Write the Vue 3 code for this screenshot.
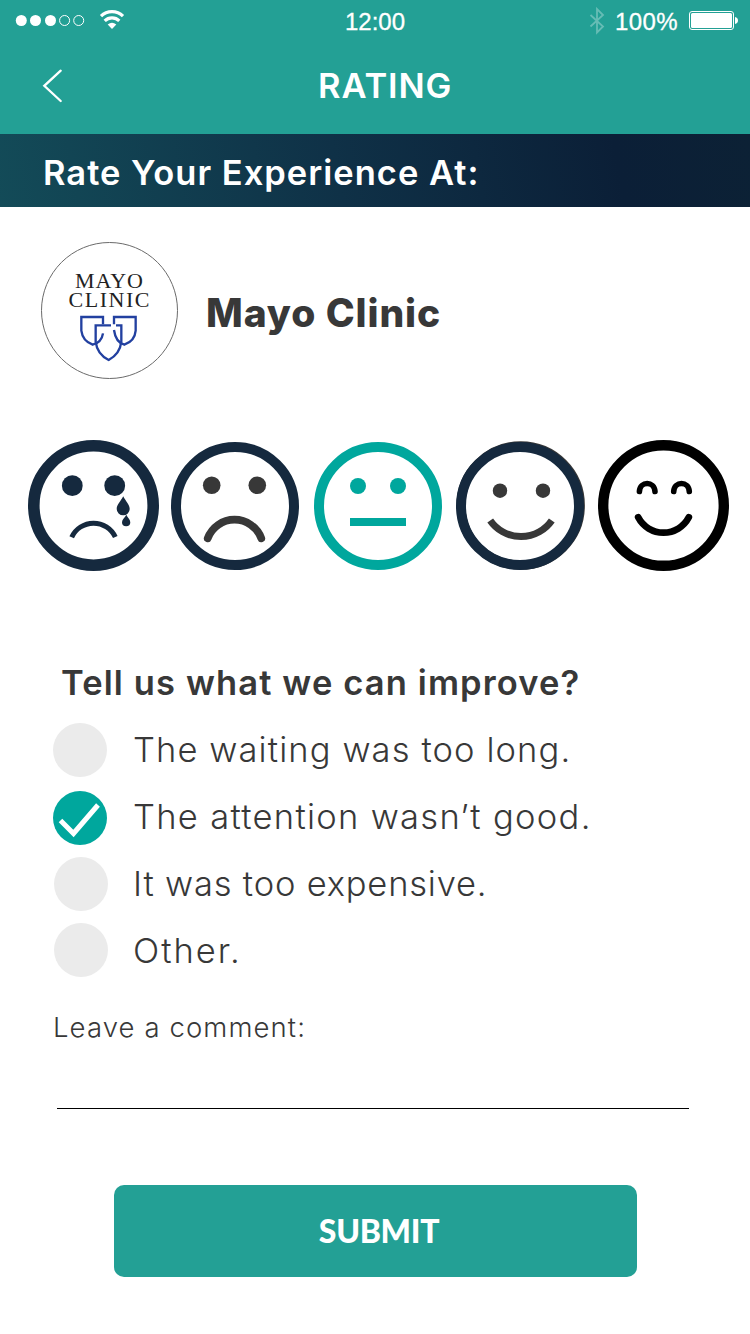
<script setup>
import { ref } from 'vue'

const options = [
  { id: 'waiting', label: 'The waiting was too long.' },
  { id: 'attention', label: 'The attention wasn’t good.' },
  { id: 'expensive', label: 'It was too expensive.' },
  { id: 'other', label: 'Other.' },
]
const selected = ref('attention')
</script>

<template>
  <main class="screen">
    <header class="top">
      <div class="status">
        <svg class="signal" width="130" height="40" viewBox="0 0 130 40">
          <g fill="#fff">
            <circle cx="21.3" cy="20.5" r="5.5" />
            <circle cx="35.5" cy="20.5" r="5.5" />
            <circle cx="50.5" cy="20.5" r="5.5" />
          </g>
          <g fill="none" stroke="#fff">
            <circle cx="64.6" cy="20.5" r="5" />
            <circle cx="78.7" cy="20.5" r="5" />
          </g>
          <g fill="none" stroke="#fff" stroke-width="3.200">
            <path d="M101 16.2a15.6 15.6 0 0 1 22 0" />
            <path d="M104.700 20.900a10.400 10.400 0 0 1 14.600 0" />
          </g>
          <path d="M107.700 24.600q4.300-3.800 8.600 0L112 29z" fill="#fff" />
        </svg>
        <span class="time">12:00</span>
        <div class="power">
          <svg class="bluetooth" width="16" height="28" viewBox="0 0 16 28">
            <path d="M1.500 8L14 19.500L8 25.500V2L14 8L1.500 19.500" fill="none" stroke="#fff" stroke-width="1.800" />
          </svg>
          <span class="percent">100%</span>
          <svg width="50" height="20" viewBox="0 0 50 20">
            <rect x=".5" y=".5" width="44" height="18" rx="2.500" fill="none" stroke="#fff" />
            <rect x="2" y="2" width="41" height="15" rx="1.500" fill="#fff" />
            <path d="M46 6q3 .8 3 3.500t-3 3.500z" fill="#fff" />
          </svg>
        </div>
      </div>
      <div class="nav">
        <svg class="back" width="22" height="34" viewBox="0 0 22 34">
          <path d="M18.700 1.700L2.300 16.800L18.700 32" fill="none" stroke="#fff" stroke-width="2.300" stroke-linecap="round" />
        </svg>
        <h1>RATING</h1>
      </div>
    </header>

    <h2 class="banner">Rate Your Experience At:</h2>

    <section class="place">
      <svg class="logo" width="138" height="138" viewBox="0 0 138 138">
        <circle cx="68.500" cy="68.500" r="68" fill="#fff" stroke="#6b6b6b" />
        <g font-family="'Liberation Serif', serif" font-size="22" fill="#222">
          <text x="34" y="45.600" textLength="68">MAYO</text>
          <text x="27.500" y="64.800" textLength="81">CLINIC</text>
        </g>
        <g transform="translate(-11 -12) scale(.33333)" fill="none" stroke="#2240a0" stroke-width="7">
          <path d="M219 283V261H154V302C157 326 171 338 188 344C204 340 216 330 219 310" />
          <path d="M252 283V261H317V302C315 326 301 338 283 344C269 340 256 330 252 300" />
          <path d="M243 286H197V335C200 362 216 380 236 390C255 380 271 362 274 335V286H258" />
        </g>
      </svg>
      <strong>Mayo Clinic</strong>
    </section>

    <section class="faces">
      <svg width="143" height="142" viewBox="22 435 143 142" fill="none" stroke="#15293e">
        <circle cx="93.500" cy="505.500" r="59.700" stroke-width="11.600" />
        <g fill="#15293e" stroke="none">
          <circle cx="72.300" cy="485.700" r="10.400" />
          <circle cx="114.700" cy="485.700" r="10.400" />
          <path d="M123.200 496.300C125.500 501 129.700 504.500 129.700 509A6.500 6.300 0 0 1 116.700 509C116.700 504.500 121 501 123.200 496.300Z" />
          <path d="M126.300 514.700C127.500 517.500 130.300 519.500 130.300 522.300A4.150 3.900 0 0 1 122 522.300C122 519.500 125 517.500 126.300 514.700Z" />
        </g>
        <path d="M71.700 537.200A24 24 0 0 1 115.300 537" stroke-width="5" />
      </svg>
      <svg width="141" height="142" viewBox="165 435 141 142" fill="none" stroke="#383838">
        <circle cx="235" cy="506" r="59" stroke="#15293e" stroke-width="10" />
        <g fill="#383838" stroke="none">
          <circle cx="211.700" cy="485.300" r="8.800" />
          <circle cx="257.300" cy="485.300" r="8.800" />
        </g>
        <path d="M207.700 538.300A28.600 28.600 0 0 1 261.300 538.300" stroke-width="7.700" stroke-linecap="round" />
      </svg>
      <svg width="143" height="142" viewBox="306 435 143 142" fill="#00a79d">
        <circle cx="378" cy="506" r="59" fill="none" stroke="#00a79d" stroke-width="10" />
        <circle cx="358" cy="486" r="8" />
        <circle cx="398" cy="486" r="8" />
        <rect x="350" y="518" width="56" height="8" />
      </svg>
      <svg width="142" height="142" viewBox="449 435 142 142" fill="none" stroke="#383838">
        <circle cx="520.700" cy="505.500" r="59.700" stroke-width="9" />
        <circle cx="520" cy="506" r="59" stroke="#15293e" stroke-width="10" />
        <g fill="#383838" stroke="none">
          <circle cx="500" cy="490.700" r="7.200" />
          <circle cx="543" cy="490.700" r="7.200" />
        </g>
        <path d="M490.200 520.500A37.500 37.500 0 0 0 551.800 520.500" stroke-width="7" />
      </svg>
      <svg width="142" height="142" viewBox="591 435 142 142" fill="none" stroke="#000" stroke-linecap="round">
        <circle cx="663.500" cy="505.500" r="60.300" stroke-width="10.400" />
        <path d="M639.400 491.500C640 480.800 654.300 480.800 655 491.500M673.700 491.500C674.300 480.800 688.700 480.800 689.300 491.500" stroke-width="5.600" />
        <path d="M638.200 517.300A28.500 28.500 0 0 0 688.800 517.300" stroke-width="6.800" />
      </svg>
    </section>

    <form class="feedback" @submit.prevent>
      <h3>Tell us what we can improve?</h3>
      <ul>
        <li v-for="option in options" :key="option.id" :class="option.id" @click="selected = option.id">
          <svg class="mark" :class="{ on: selected === option.id }" width="54" height="54" viewBox="0 0 54 54">
            <circle cx="27" cy="27" r="27" />
            <path v-if="selected === option.id" d="M7.500 29.500L20.500 42.500L45 14" fill="none" stroke="#fff" stroke-width="5" />
          </svg>
          <span>{{ option.label }}</span>
        </li>
      </ul>
      <label for="comment">Leave a comment:</label>
      <input id="comment" type="text" />
      <button type="submit">SUBMIT</button>
    </form>
  </main>
</template>

<style>
body {
  margin: 0;
  background: #fff;
}
</style>

<style scoped>
.screen {
  width: 750px;
  height: 1334px;
  overflow: hidden;
  background: #fff;
  color: #383838;
  font-family: Inter, "Liberation Sans", sans-serif;
}
h1, h2, h3, ul {
  margin: 0;
  padding: 0;
}
svg {
  display: block;
  flex: none;
}
.top {
  height: 134px;
  background: #23a095;
  color: #fff;
}
.status {
  display: grid;
  grid-template-columns: 300px 150px 300px;
  height: 40px;
  font: 24px/43px "Liberation Sans", sans-serif;
  -webkit-text-stroke: 0.3px #fff;
}
.time {
  text-align: center;
}
.power {
  display: flex;
  justify-content: flex-end;
  align-items: flex-start;
  padding-right: 11px;
}
.power svg:last-child {
  margin-top: 11px;
}
.bluetooth {
  margin: 7px 10px 0 0;
  opacity: 0.3;
}
.percent {
  width: 74px;
  letter-spacing: 0.4px;
}
.nav {
  display: flex;
  height: 94px;
}
.back {
  margin: 29px 0 0 42px;
}
h1 {
  margin-left: 254px;
  font-size: 34.500px;
  font-weight: 600;
  line-height: 91px;
  letter-spacing: 0.9px;
}
.banner {
  height: 73px;
  padding-left: 43px;
  background: linear-gradient(80deg, #134b58 0%, #0f3147 45%, #0b1f37 82%, #0c2135 100%);
  color: #fff;
  font-size: 34.500px;
  font-weight: 600;
  line-height: 77px;
  letter-spacing: 1px;
}
.place {
  display: flex;
  align-items: center;
  height: 138px;
  padding: 35px 0 0 41px;
}
.place strong {
  margin-left: 27px;
  padding-top: 2px;
  font-size: 39px;
  font-weight: 800;
  letter-spacing: 0.9px;
}
.faces {
  display: flex;
  padding: 55px 0 0 22px;
}
.feedback {
  display: flex;
  flex-direction: column;
  padding: 82px 0 0 53px;
}
h3 {
  padding-left: 8px;
  font-size: 34.500px;
  font-weight: 600;
  line-height: 48px;
  letter-spacing: 1.120px;
}
ul {
  display: grid;
  grid-template-rows: 67px 67px 67px 67px;
  margin-top: 9px;
  list-style: none;
}
li {
  display: grid;
  grid-template-columns: 80px 1fr;
  align-items: center;
  font-size: 34.500px;
  font-weight: 300;
  letter-spacing: 1.100px;
}
.mark {
  fill: #ebebeb;
}
.mark.on {
  fill: #00a79d;
}
.attention {
  letter-spacing: 1.300px;
}
.attention .mark {
  margin-top: 2px;
}
.expensive {
  letter-spacing: 0.800px;
}
.expensive .mark,
.other .mark {
  margin-left: 1px;
}
.other {
  letter-spacing: 2px;
}
.other .mark {
  margin-top: -2px;
}
label {
  margin-top: 23px;
  font-size: 27.500px;
  font-weight: 300;
  line-height: 40px;
  letter-spacing: 1.100px;
}
input {
  width: 632px;
  height: 61px;
  margin: 1px 0 0 4px;
  padding: 0;
  border: 0;
  border-bottom: 1px solid #000;
  box-sizing: border-box;
  background: transparent;
  font: inherit;
  outline: 0;
}
button {
  width: 523px;
  height: 92px;
  margin: 76px 0 0 61px;
  padding: 0 0 0 7px;
  border: 0;
  border-radius: 10px;
  background: #23a095;
  color: #fff;
  font: 900 32px/92px Lato, sans-serif;
  letter-spacing: -0.3px;
}
</style>
